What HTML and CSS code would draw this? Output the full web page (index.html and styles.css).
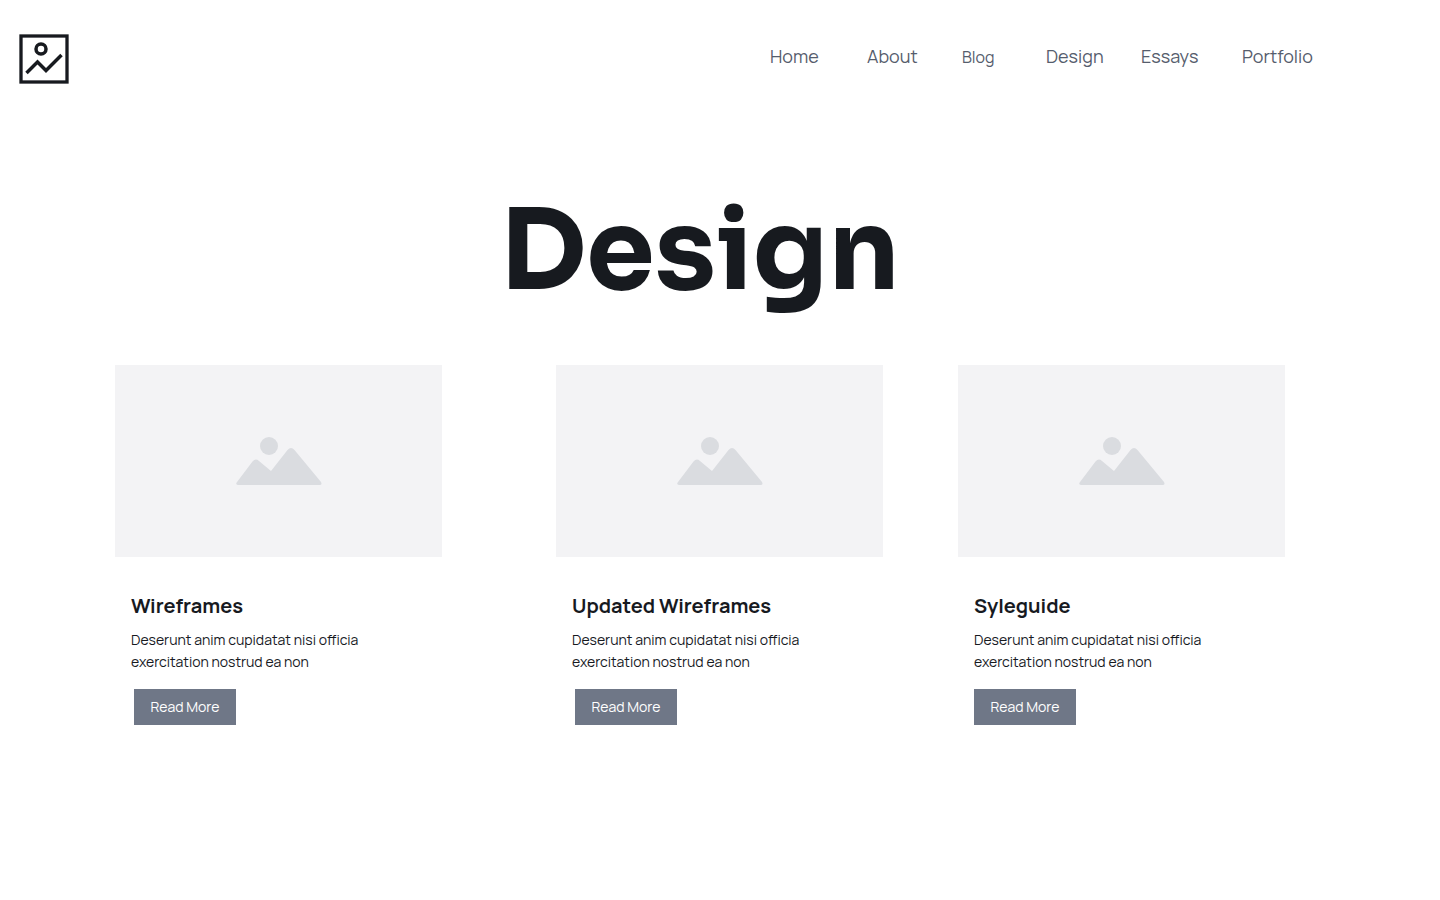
FILE: index.html
```html
<!DOCTYPE html>
<html lang="en">
<head>
<meta charset="utf-8">
<meta name="viewport" content="width=device-width, initial-scale=1">
<title>Design</title>
<link rel="stylesheet" href="styles.css">
</head>
<body>
<svg width="0" height="0" class="sprite" aria-hidden="true">
  <symbol id="picture" viewBox="0 0 86 50">
    <circle cx="33" cy="10" r="9"/>
    <path d="M2 49Q-1 48.500 1 46L16.500 25.500Q19.500 22 23 25L35 35L51.500 14Q55 10 58.500 14L85 46Q86.500 49 83.500 49Z"/>
  </symbol>
</svg>
<header class="header">
  <a class="logo" href="#" aria-label="Homepage">
    <svg viewBox="0 0 50 50" aria-hidden="true">
      <rect x="2" y="2" width="46" height="46" stroke-width="3.300"/>
      <circle cx="22" cy="15" r="5" stroke-width="3.500"/>
      <path d="M7.500 39L18.500 28L27 36.500L42.500 21" stroke-width="3.500"/>
    </svg>
  </a>
  <nav class="nav" aria-label="Main">
    <a href="#">Home</a>
    <a href="#">About</a>
    <a class="nav-small" href="#">Blog</a>
    <a href="#">Design</a>
    <a href="#">Essays</a>
    <a href="#">Portfolio</a>
  </nav>
</header>
<main>
  <h1 class="title">Design</h1>
  <div class="cards">
    <article class="card">
      <div class="thumb"><svg aria-hidden="true"><use href="#picture"/></svg></div>
      <div class="card-body">
        <h2>Wireframes</h2>
        <p>Deserunt anim cupidatat nisi officia exercitation nostrud ea non</p>
        <button class="more indented" type="button">Read More</button>
      </div>
    </article>
    <article class="card">
      <div class="thumb"><svg aria-hidden="true"><use href="#picture"/></svg></div>
      <div class="card-body">
        <h2>Updated Wireframes</h2>
        <p>Deserunt anim cupidatat nisi officia exercitation nostrud ea non</p>
        <button class="more indented" type="button">Read More</button>
      </div>
    </article>
    <article class="card">
      <div class="thumb"><svg aria-hidden="true"><use href="#picture"/></svg></div>
      <div class="card-body">
        <h2>Syleguide</h2>
        <p>Deserunt anim cupidatat nisi officia exercitation nostrud ea non</p>
        <button class="more" type="button">Read More</button>
      </div>
    </article>
  </div>
</main>
</body>
</html>
```
FILE: styles.css
```css
* { box-sizing: border-box; }
body {
  margin: 0;
  background: #fff;
  color: #171a1f;
  font-family: Manrope, Inter, "Liberation Sans", sans-serif;
}
.sprite { display: block; }
.header {
  display: flex;
  align-items: flex-start;
  justify-content: space-between;
  padding: 34px 127px 0 19px;
}
.logo, .logo svg {
  display: block;
  width: 50px;
  height: 50px;
}
.logo svg { fill: none; stroke: #171a1f; }
.nav {
  display: grid;
  grid-template-columns: 97px 95px 84px 95px 101px 71px;
  align-items: baseline;
  padding-top: 8px;
  font-size: 18px;
  line-height: 28px;
  font-weight: 400;
}
.nav a { color: #565d6d; text-decoration: none; }
.nav .nav-small { font-size: 16px; }
.title {
  margin: 84px 0 29px;
  padding-right: 40px;
  text-align: center;
  font-family: Sora, Inter, "Liberation Sans", sans-serif;
  font-size: 110px;
  line-height: 168px;
  font-weight: 700;
}
.cards {
  display: grid;
  grid-template-columns: 327fr 114fr 327fr 75fr 327fr;
  padding: 0 155px 0 115px;
}
.card:nth-child(2) { grid-column: 3; }
.card:nth-child(3) { grid-column: 5; }
.thumb {
  display: flex;
  align-items: center;
  justify-content: center;
  height: 192px;
  background: #f3f3f5;
}
.thumb svg { width: 86px; height: 50px; fill: #dadce0; }
.card-body { padding: 33px 16px; }
h2 {
  margin: 0 0 7px;
  font-size: 20px;
  line-height: 32px;
  font-weight: 700;
}
p {
  max-width: 240px;
  margin: 0 0 16px;
  font-size: 14px;
  line-height: 22px;
  font-weight: 400;
}
.more {
  width: 102px;
  height: 36px;
  padding: 0;
  border: 0;
  background: #6f7787;
  color: #fff;
  font: 400 14px/22px Manrope, Inter, "Liberation Sans", sans-serif;
}
.indented { margin-left: 3px; }
```
